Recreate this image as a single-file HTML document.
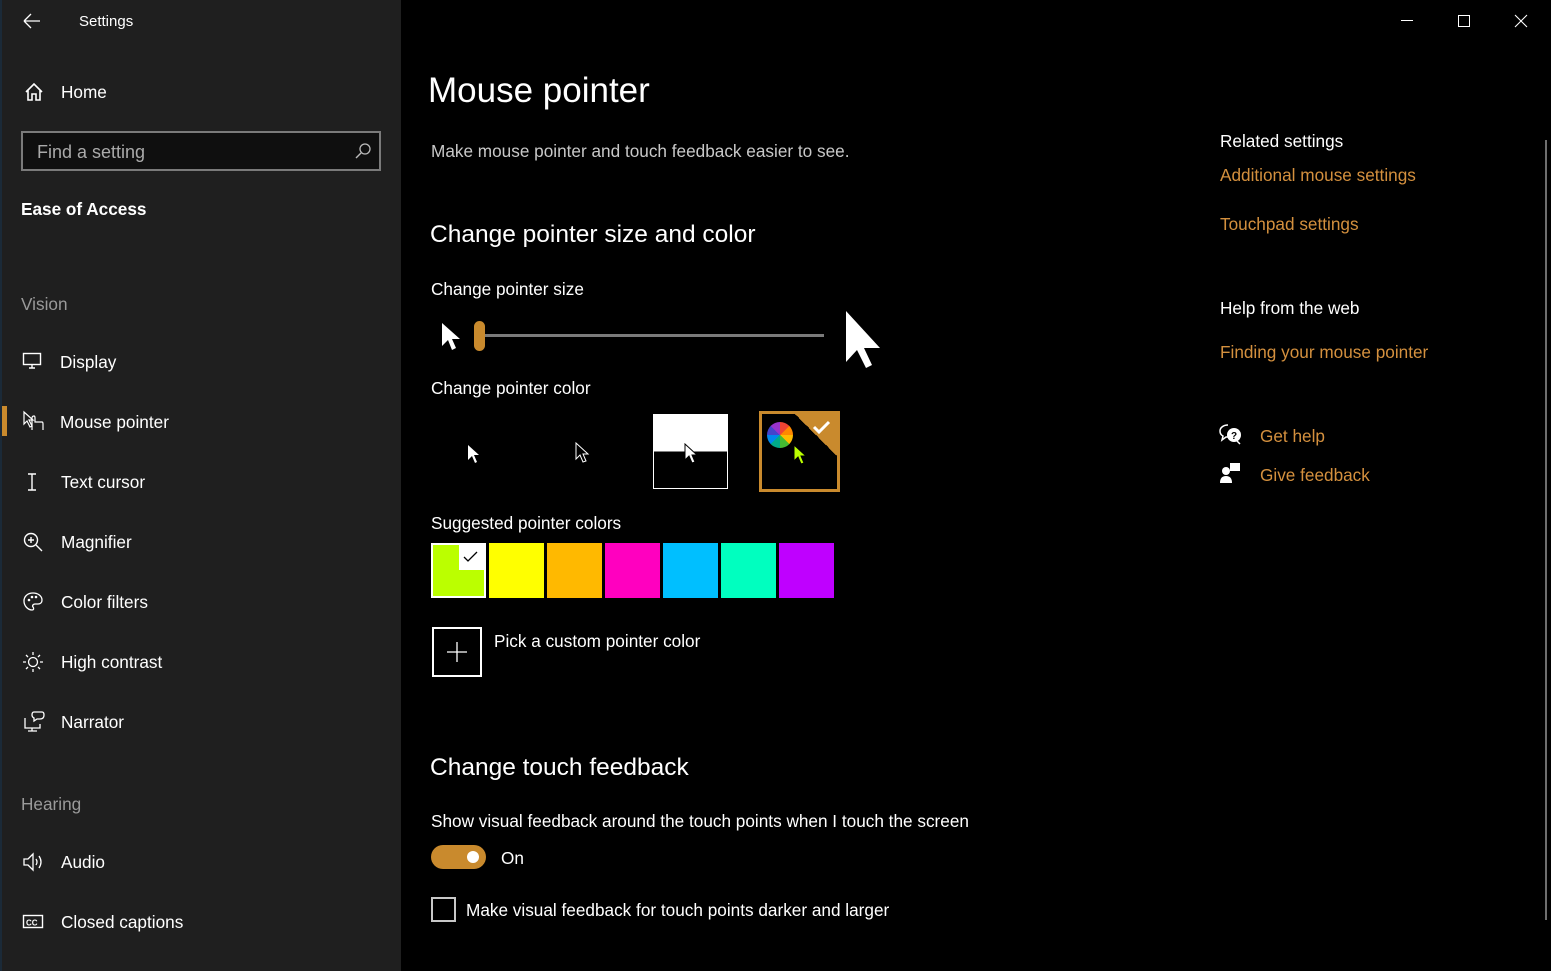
<!DOCTYPE html>
<html><head><meta charset="utf-8"><style>
*{margin:0;padding:0;box-sizing:border-box}
body{width:1551px;height:971px;background:#000;position:relative;overflow:hidden;font-family:"Liberation Sans",sans-serif;color:#fff}
.t{position:absolute;white-space:nowrap;line-height:1}
#side{position:absolute;left:0;top:0;width:401px;height:971px;background:#1f1f1f;border-left:2px solid #1b2a38}
.s{font-size:17.2px}
.ic{position:absolute}
.lk{color:#d4903e;font-size:17.2px}
</style></head><body>
<div id="side">
<svg class="ic" style="left:20px;top:12px" width="20" height="18"><path d="M2 9H18M2 9L9 2M2 9L9 16" stroke="#fff" stroke-width="1.3" fill="none"/></svg>
<div class="t" style="left:77px;top:14px;font-size:15px">Settings</div>
<svg class="ic" style="left:22px;top:82px" width="20" height="20"><path d="M2 10L10 2L18 10M4 8V18H8V12H12V18H16V8" stroke="#fff" stroke-width="1.6" fill="none"/></svg>
<div class="t s" style="left:59px;top:84px">Home</div>
<div style="position:absolute;left:19px;top:131px;width:360px;height:40px;border:2px solid #7a7a7a;background:#0f0f0f"></div>
<div class="t" style="left:35px;top:143px;font-size:18px;color:#aaa">Find a setting</div>
<svg class="ic" style="left:352px;top:142px" width="18" height="18"><circle cx="11" cy="7" r="5" stroke="#bbb" stroke-width="1.3" fill="none"/><path d="M7 11L2 16" stroke="#bbb" stroke-width="1.4"/></svg>
<div class="t s" style="left:19px;top:201px;font-weight:bold">Ease of Access</div>
<div class="t s" style="left:19px;top:296px;color:#9a9a9a">Vision</div>
<svg class="ic" style="left:20px;top:352px" width="22" height="18"><rect x="1.5" y="1.5" width="17" height="11" stroke="#fff" stroke-width="1.4" fill="none"/><path d="M7 16H13M10 13V16" stroke="#fff" stroke-width="1.4"/></svg>
<div class="t s" style="left:58px;top:354px">Display</div>
<div style="position:absolute;left:0;top:406px;width:5px;height:30px;background:#c98a2d"></div>
<svg class="ic" style="left:20px;top:410px" width="24" height="22"><path d="M2 2V14L5 11L8 17L10 16L7 10H11Z" stroke="#fff" stroke-width="1.2" fill="none"/><path d="M10 20V8Q10 6 12 6Q13 6 13 8V12H20Q21 12 21 14V20" stroke="#fff" stroke-width="1.2" fill="none"/></svg>
<div class="t s" style="left:58px;top:414px">Mouse pointer</div>
<svg class="ic" style="left:22px;top:472px" width="16" height="20"><path d="M4 2H12M4 18H12M8 2V18" stroke="#fff" stroke-width="1.4"/></svg>
<div class="t s" style="left:59px;top:474px">Text cursor</div>
<svg class="ic" style="left:20px;top:531px" width="22" height="22"><circle cx="9" cy="9" r="6.5" stroke="#fff" stroke-width="1.4" fill="none"/><path d="M14 14L20 20M6 9H12M9 6V12" stroke="#fff" stroke-width="1.4"/></svg>
<div class="t s" style="left:59px;top:534px">Magnifier</div>
<svg class="ic" style="left:20px;top:591px" width="22" height="22"><path d="M11 2C5 2 2 6 2 10C2 15 6 19 10 19C12 19 12 17 11 16C10 15 11 13 13 13H16C19 13 20 11 20 9C20 5 16 2 11 2Z" stroke="#fff" stroke-width="1.3" fill="none"/><circle cx="7" cy="9" r="1.3" fill="#fff"/><circle cx="10" cy="6" r="1.3" fill="#fff"/><circle cx="14" cy="6" r="1.3" fill="#fff"/></svg>
<div class="t s" style="left:59px;top:594px">Color filters</div>
<svg class="ic" style="left:20px;top:651px" width="22" height="22"><circle cx="11" cy="11" r="4.5" stroke="#fff" stroke-width="1.3" fill="none"/><path d="M11 1V4M11 18V21M1 11H4M18 11H21M4 4L6 6M16 16L18 18M4 18L6 16M16 6L18 4" stroke="#fff" stroke-width="1.3"/></svg>
<div class="t s" style="left:59px;top:654px">High contrast</div>
<svg class="ic" style="left:20px;top:710px" width="24" height="24"><path d="M3 8V18H18V14M6 21H15M10 18V21" stroke="#fff" stroke-width="1.3" fill="none"/><path d="M12 2H20Q22 2 22 5Q22 9 18 9H15L12 11V8Q10 7 10 5Q10 2 12 2Z" stroke="#fff" stroke-width="1.3" fill="none"/></svg>
<div class="t s" style="left:59px;top:714px">Narrator</div>
<div class="t s" style="left:19px;top:796px;color:#9a9a9a">Hearing</div>
<svg class="ic" style="left:20px;top:851px" width="24" height="22"><path d="M2 8H6L11 3V19L6 14H2Z" stroke="#fff" stroke-width="1.3" fill="none"/><path d="M14 8Q16 11 14 14M17 5Q21 11 17 17" stroke="#fff" stroke-width="1.3" fill="none"/></svg>
<div class="t s" style="left:59px;top:854px">Audio</div>
<svg class="ic" style="left:20px;top:913px" width="24" height="18"><rect x="1.5" y="2.5" width="19" height="12" stroke="#fff" stroke-width="1.4" fill="none"/><text x="4" y="12.5" font-size="8" font-weight="bold" fill="#fff" font-family="Liberation Sans">CC</text></svg>
<div class="t s" style="left:59px;top:914px">Closed captions</div>
</div>

<div style="position:absolute;left:1401px;top:20px;width:12px;height:1px;background:#fff"></div>
<div style="position:absolute;left:1458px;top:15px;width:12px;height:12px;border:1px solid #fff"></div>
<svg class="ic" style="left:1514px;top:14px" width="14" height="14"><path d="M1 1L13 13M13 1L1 13" stroke="#fff" stroke-width="1.1"/></svg>
<div style="position:absolute;left:1545px;top:140px;width:2px;height:780px;background:#6e6e6e"></div>

<div class="t" style="left:428px;top:73px;font-size:35px">Mouse pointer</div>
<div class="t" style="left:431px;top:143px;font-size:17.2px;color:#c8c8c8">Make mouse pointer and touch feedback easier to see.</div>
<div class="t" style="left:430px;top:223px;font-size:24.5px">Change pointer size and color</div>
<div class="t s" style="left:431px;top:281px">Change pointer size</div>
<svg class="ic" style="left:441px;top:322px" width="20" height="32"><path d="M1 1V24L7 18L11 28L15 26L11 17H19Z" fill="#fff"/></svg>
<div style="position:absolute;left:480px;top:334px;width:344px;height:3px;background:#7a7a7a"></div>
<div style="position:absolute;left:474px;top:321px;width:11px;height:30px;border-radius:6px;background:#c98a2d"></div>
<svg class="ic" style="left:844px;top:310px" width="40" height="60"><path d="M2 1V52L13 40L22 58L28 55L20 38H36Z" fill="#fff"/></svg>

<div class="t s" style="left:431px;top:380px">Change pointer color</div>
<svg class="ic" style="left:467px;top:444px" width="14" height="22"><path d="M1 1V16L5 12L8 19L10 18L7 11H12Z" fill="#fff"/></svg>
<svg class="ic" style="left:575px;top:442px" width="16" height="24"><path d="M1 1V17L5 13L8 20L11 19L8 12H13Z" fill="#000" stroke="#fff" stroke-width="1"/></svg>
<div style="position:absolute;left:653px;top:414px;width:75px;height:75px;border:1px solid #fff;background:linear-gradient(#fff 50%,#000 50%)"></div>
<svg class="ic" style="left:684px;top:443px" width="16" height="24"><path d="M1 1V17L5 13L8 20L11 19L8 12H13Z" fill="#fff" stroke="#000" stroke-width="1"/></svg>
<div style="position:absolute;left:759px;top:411px;width:81px;height:81px;border:3px solid #c98a2d;background:linear-gradient(225deg,#c98a2d 0,#c98a2d 28%,#000 28%)"></div>
<svg class="ic" style="left:810px;top:418px" width="24" height="20"><path d="M4 9L9 14L19 4" stroke="#fff" stroke-width="3" fill="none"/></svg>
<div style="position:absolute;left:767px;top:422px;width:26px;height:26px;border-radius:50%;background:conic-gradient(#e43 0 45deg,#f80 45deg 90deg,#fb0 90deg 135deg,#4b3 135deg 180deg,#0a8 180deg 225deg,#08e 225deg 270deg,#44c 270deg 315deg,#93c 315deg)"></div>
<svg class="ic" style="left:793px;top:444px" width="16" height="24"><path d="M1 1V17L5 13L8 20L11 19L8 12H13Z" fill="#bf0" stroke="#000" stroke-width="1"/></svg>

<div class="t s" style="left:431px;top:515px">Suggested pointer colors</div>
<div style="position:absolute;left:431px;top:543px;width:55px;height:55px;border:2px solid #fff;background:#bf0"></div>
<div style="position:absolute;left:459px;top:545px;width:25px;height:25px;background:#fff"></div>
<svg class="ic" style="left:462px;top:550px" width="18" height="14"><path d="M2 7L6 11L15 2" stroke="#000" stroke-width="1.3" fill="none"/></svg>
<div style="position:absolute;left:489px;top:543px;width:55px;height:55px;background:#ff0"></div>
<div style="position:absolute;left:547px;top:543px;width:55px;height:55px;background:#ffb900"></div>
<div style="position:absolute;left:605px;top:543px;width:55px;height:55px;background:#ff00bf"></div>
<div style="position:absolute;left:663px;top:543px;width:55px;height:55px;background:#00bfff"></div>
<div style="position:absolute;left:721px;top:543px;width:55px;height:55px;background:#00ffbf"></div>
<div style="position:absolute;left:779px;top:543px;width:55px;height:55px;background:#bf00ff"></div>

<div style="position:absolute;left:432px;top:627px;width:50px;height:50px;border:2px solid #fff"></div>
<svg class="ic" style="left:446px;top:641px" width="22" height="22"><path d="M11 1V21M1 11H21" stroke="#fff" stroke-width="1.3"/></svg>
<div class="t s" style="left:494px;top:633px">Pick a custom pointer color</div>

<div class="t" style="left:430px;top:756px;font-size:24.5px">Change touch feedback</div>
<div class="t s" style="left:431px;top:813px">Show visual feedback around the touch points when I touch the screen</div>
<div style="position:absolute;left:431px;top:845px;width:55px;height:24px;border-radius:12px;background:#c98a2d"></div>
<div style="position:absolute;left:467px;top:851px;width:12px;height:12px;border-radius:50%;background:#fff"></div>
<div class="t s" style="left:501px;top:850px">On</div>
<div style="position:absolute;left:431px;top:897px;width:25px;height:25px;border:2px solid #c8c8c8"></div>
<div class="t s" style="left:466px;top:902px">Make visual feedback for touch points darker and larger</div>

<div class="t s" style="left:1220px;top:133px">Related settings</div>
<div class="t lk" style="left:1220px;top:167px">Additional mouse settings</div>
<div class="t lk" style="left:1220px;top:216px">Touchpad settings</div>
<div class="t s" style="left:1220px;top:300px">Help from the web</div>
<div class="t lk" style="left:1220px;top:344px">Finding your mouse pointer</div>
<svg class="ic" style="left:1219px;top:423px" width="24" height="22"><path d="M9 2C4 2 1 5 1 8C1 10 2 12 4 13L3 17L7 14Q8 14 9 14" stroke="#fff" stroke-width="1.5" fill="none"/><circle cx="15" cy="12" r="7" fill="#fff"/><text x="12" y="16" font-size="10" font-weight="bold" fill="#000" font-family="Liberation Sans">?</text><path d="M18 18L21 21" stroke="#fff" stroke-width="1.5"/></svg>
<div class="t lk" style="left:1260px;top:428px">Get help</div>
<svg class="ic" style="left:1219px;top:462px" width="24" height="22"><rect x="11" y="1" width="10" height="8" fill="#fff"/><circle cx="7" cy="9" r="4" fill="#fff"/><path d="M1 21Q1 14 7 14Q13 14 13 21Z" fill="#fff"/></svg>
<div class="t lk" style="left:1260px;top:467px">Give feedback</div>
</body></html>
